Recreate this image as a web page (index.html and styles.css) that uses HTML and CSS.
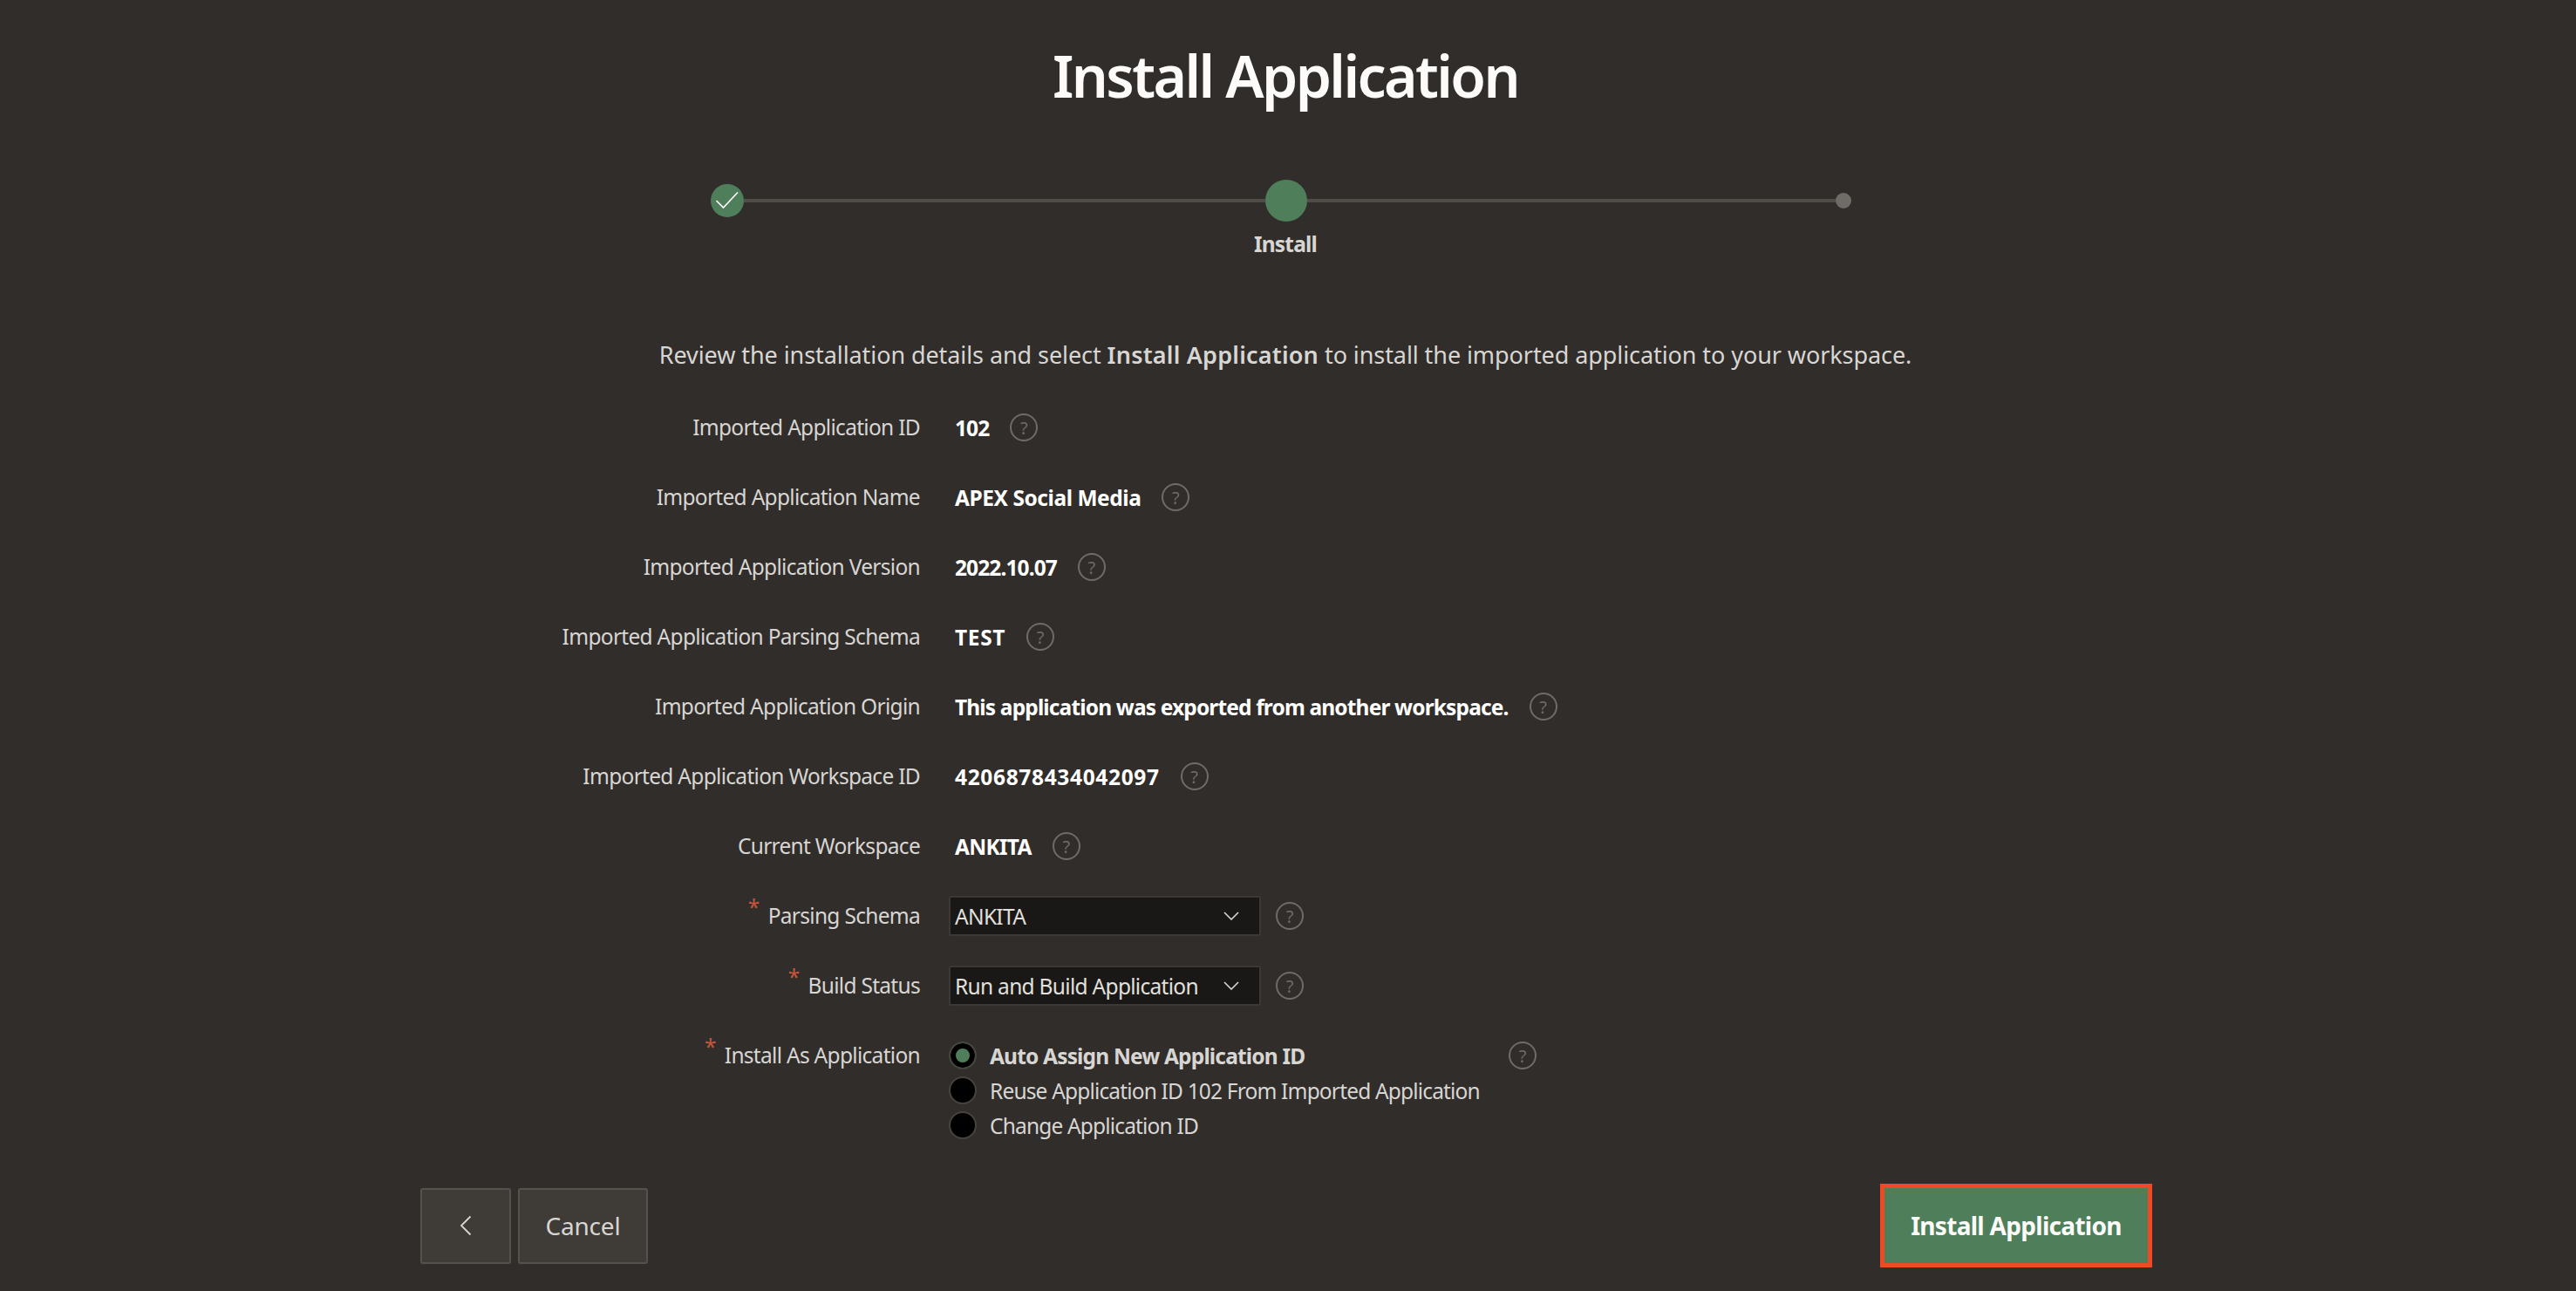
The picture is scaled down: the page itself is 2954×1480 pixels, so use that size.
FILE: index.html
```html
<!DOCTYPE html>
<html lang="en">

<head>
    <meta charset="UTF-8">
    <title>Install Application</title>
    <link rel="stylesheet" href="styles.css">
</head>

<body>
    <div class="page">
        <h1 class="title">Install Application</h1>

        <div class="stepper">
            <div class="track">
                <span class="step step-done">
                    <svg viewBox="0 0 38 38" width="38" height="38"><path d="M6.500 19 L14.500 27 L31 9.500" fill="none" stroke="#fff" stroke-width="1.600"/></svg>
                </span>
                <span class="line line-first"></span>
                <span class="step step-active"></span>
                <span class="line line-second"></span>
                <span class="step step-last"></span>
            </div>
            <div class="step-label">Install</div>
        </div>

        <p class="intro">Review the installation details and select <b>Install Application</b> to install the imported application to your workspace.</p>

        <form class="form">
            <div class="row">
                <label class="label">Imported Application ID</label>
                <div class="field"><span class="value value-num">102</span><span class="help">?</span></div>
            </div>
            <div class="row">
                <label class="label">Imported Application Name</label>
                <div class="field"><span class="value value-name">APEX Social Media</span><span class="help">?</span></div>
            </div>
            <div class="row">
                <label class="label">Imported Application Version</label>
                <div class="field"><span class="value value-num">2022.10.07</span><span class="help">?</span></div>
            </div>
            <div class="row">
                <label class="label">Imported Application Parsing Schema</label>
                <div class="field"><span class="value value-wide">TEST</span><span class="help">?</span></div>
            </div>
            <div class="row">
                <label class="label">Imported Application Origin</label>
                <div class="field"><span class="value value-tight">This application was exported from another workspace.</span><span class="help">?</span></div>
            </div>
            <div class="row">
                <label class="label">Imported Application Workspace ID</label>
                <div class="field"><span class="value value-wide">4206878434042097</span><span class="help">?</span></div>
            </div>
            <div class="row">
                <label class="label">Current Workspace</label>
                <div class="field"><span class="value">ANKITA</span><span class="help">?</span></div>
            </div>
            <div class="row">
                <label class="label"><span class="req">*</span>Parsing Schema</label>
                <div class="field field-input">
                    <div class="select">
                        <span>ANKITA</span>
                        <svg viewBox="0 0 18 10" width="18" height="10"><path d="M1 1 L9 9 L17 1" fill="none" stroke="#d8d6d3" stroke-width="1.600"/></svg>
                    </div>
                    <span class="help">?</span>
                </div>
            </div>
            <div class="row">
                <label class="label"><span class="req">*</span>Build Status</label>
                <div class="field field-input">
                    <div class="select">
                        <span>Run and Build Application</span>
                        <svg viewBox="0 0 18 10" width="18" height="10"><path d="M1 1 L9 9 L17 1" fill="none" stroke="#d8d6d3" stroke-width="1.600"/></svg>
                    </div>
                    <span class="help">?</span>
                </div>
            </div>
            <div class="row row-radios">
                <label class="label"><span class="req">*</span>Install As Application</label>
                <div class="field field-input field-radios">
                    <div class="radios">
                        <div class="radio-item radio-on"><span class="radio"></span>Auto Assign New Application ID</div>
                        <div class="radio-item"><span class="radio"></span>Reuse Application ID 102 From Imported Application</div>
                        <div class="radio-item"><span class="radio"></span>Change Application ID</div>
                    </div>
                    <span class="help">?</span>
                </div>
            </div>
        </form>

        <div class="footer">
            <div class="footer-left">
                <button type="button" class="btn btn-back">
                    <svg viewBox="0 0 14 24" width="14" height="24"><path d="M12.500 1.500 L2 12 L12.500 22.500" fill="none" stroke="#d8d6d3" stroke-width="1.800"/></svg>
                </button>
                <button type="button" class="btn btn-cancel">Cancel</button>
            </div>
            <button type="button" class="btn-install">Install Application</button>
        </div>
    </div>
</body>

</html>
```

FILE: styles.css
```css
html {
    background-color: #312d2a;
}

body {
    margin: 0;
    font-family: "Noto Sans", "Open Sans", sans-serif;
    font-size: 24.5px;
    letter-spacing: -0.7px;
    color: #d8d6d3;
}

.page {
    width: 2948px;
    height: 1480px;
    overflow: hidden;
}

.title {
    margin: 0;
    height: 176px;
    padding-bottom: 4px;
    box-sizing: border-box;
    line-height: 172px;
    text-align: center;
    font-size: 66px;
    font-weight: 600;
    letter-spacing: -2.6px;
    color: #fcfbfa;
}

/* wizard steps */
.stepper {
    margin: 30px 0 0 815px;
    width: 1308px;
}

.track {
    display: flex;
    align-items: center;
    height: 48px;
}

.line {
    height: 4px;
    background-color: #504c48;
}

.line-first {
    flex: 598;
}

.line-second {
    flex: 606;
}

.step {
    border-radius: 50%;
    flex: none;
}

.step-done {
    width: 38px;
    height: 38px;
    background-color: #4e7f5a;
}

.step-done svg {
    display: block;
}

.step-active {
    width: 48px;
    height: 48px;
    background-color: #4e7f5a;
}

.step-last {
    width: 18px;
    height: 18px;
    background-color: #6f6b67;
}

.step-label {
    margin-top: 10px;
    padding-left: 10px;
    line-height: 32px;
    text-align: center;
    font-weight: 700;
    letter-spacing: -0.8px;
    color: #d8d6d3;
}

/* description */
.intro {
    margin: 91px 0 0;
    height: 63px;
    line-height: 40px;
    text-align: center;
    font-size: 27px;
    letter-spacing: -0.08px;
}

.intro b {
    font-weight: 600;
    letter-spacing: 0.2px;
}

/* form rows */
.row {
    display: flex;
    align-items: center;
    height: 80px;
}

.row-radios {
    align-items: flex-start;
    height: 120px;
    margin-top: 20px;
}

.label {
    width: 1055px;
    line-height: 40px;
    text-align: right;
    flex: none;
}

.req {
    display: inline-block;
    margin-right: 10px;
    line-height: 0;
    vertical-align: 10px;
    color: #c9553c;
}

.field {
    display: flex;
    align-items: center;
    margin-left: 40px;
}

.field-input {
    margin-left: 33px;
}

.field-radios {
    align-items: flex-start;
}

.value {
    font-weight: 700;
    color: #fff;
}

.value-wide {
    letter-spacing: 0.65px;
}

.value-num {
    letter-spacing: -0.9px;
}

.value-tight {
    letter-spacing: -0.85px;
}

.value-name {
    letter-spacing: -0.45px;
}

.help {
    display: flex;
    align-items: center;
    justify-content: center;
    flex: none;
    box-sizing: border-box;
    width: 32px;
    height: 32px;
    margin-left: 24px;
    border: 2px solid #6f6b67;
    border-radius: 50%;
    font-size: 20px;
    letter-spacing: 0;
    color: #6f6b67;
}

.select {
    display: flex;
    align-items: center;
    justify-content: space-between;
    box-sizing: border-box;
    width: 358px;
    height: 46px;
    padding: 0 23px 0 5px;
    background-color: #191817;
    border: 2px solid #3c3935;
    border-radius: 2px;
    color: #e2e0dd;
}

.field-input .select + .help {
    margin-left: 17px;
}

/* radios */
.radios {
    width: 616px;
}

.radio-item {
    display: flex;
    align-items: center;
    height: 40px;
    white-space: nowrap;
    letter-spacing: -0.83px;
}

.radio-on {
    font-weight: 700;
}

.radio {
    flex: none;
    box-sizing: border-box;
    width: 32px;
    height: 32px;
    margin-right: 15px;
    background-color: #000;
    border: 2px solid #47433f;
    border-radius: 50%;
}

.radio-on .radio {
    background-color: #4e7f5a;
    box-shadow: inset 0 0 0 6px #000;
}

.field-radios .help {
    margin: 4px 0 0 26px;
}

/* buttons */
.footer {
    display: flex;
    align-items: center;
    justify-content: space-between;
    box-sizing: border-box;
    width: 2468px;
    margin-top: 47px;
    padding-left: 482px;
}

.footer-left {
    display: flex;
    gap: 8px;
}

.btn {
    height: 87px;
    background-color: #3f3b37;
    border: 2px solid #55514d;
    border-radius: 3px;
    font-family: inherit;
    font-size: 28px;
    letter-spacing: -0.2px;
    color: #d8d6d3;
}

.btn-back {
    display: flex;
    align-items: center;
    justify-content: center;
    width: 104px;
}

.btn-cancel {
    width: 149px;
}

.btn-install {
    box-sizing: border-box;
    width: 312px;
    height: 96px;
    background-color: #4e7f5a;
    border: 5px solid #ee4a24;
    font-family: inherit;
    font-size: 28px;
    font-weight: 700;
    letter-spacing: -0.7px;
    color: #fcfbfa;
}
```
